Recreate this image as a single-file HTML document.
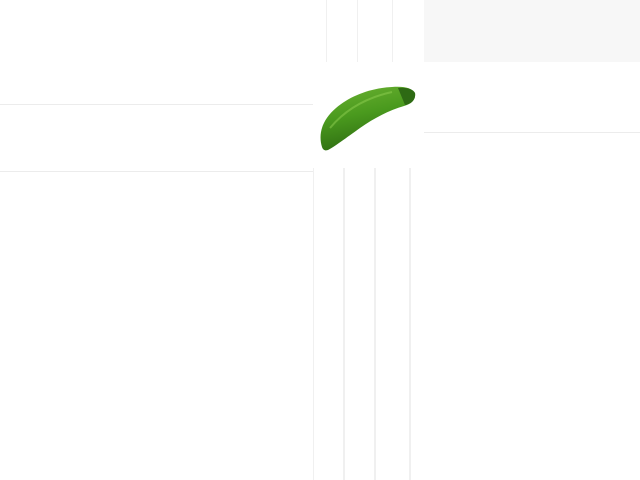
<!DOCTYPE html>
<html><head><style>
html,body{margin:0;padding:0;background:#fff;width:640px;height:480px;overflow:hidden;position:relative}
.l{position:absolute;background:#ececec}
.v{position:absolute;background:#f0f0f0}
</style></head><body>
<div style="position:absolute;left:424px;top:0;width:216px;height:62px;background:#f7f7f7"></div>
<div class="l" style="left:0;top:104px;width:313px;height:1px"></div>
<div class="l" style="left:0;top:171px;width:313px;height:1px"></div>
<div class="l" style="left:424px;top:132px;width:216px;height:1px"></div>
<div class="v" style="left:326px;top:0;width:1px;height:62px"></div>
<div class="v" style="left:357px;top:0;width:1px;height:62px"></div>
<div class="v" style="left:392px;top:0;width:1px;height:62px"></div>
<div class="v" style="left:313px;top:168px;width:1px;height:312px"></div>
<div class="v" style="left:343px;top:168px;width:2px;height:312px"></div>
<div class="v" style="left:374px;top:168px;width:2px;height:312px"></div>
<div class="v" style="left:409px;top:168px;width:2px;height:312px"></div>
<svg style="position:absolute;left:0;top:0" width="640" height="480">
<defs><linearGradient id="g" x1="0" y1="0" x2="0.3" y2="1">
<stop offset="0" stop-color="#6cb232"/><stop offset="0.5" stop-color="#4a9a1e"/><stop offset="1" stop-color="#2f6e12"/></linearGradient></defs>
<path d="M322,147 C318,134 322,120 336,108 C350,96 370,88 392,87 C404,86 412,88 415,93 C416,99 412,104 404,106 C390,110 374,118 360,128 C346,138 334,147 328,150 C325,151 323,150 322,147 Z" fill="url(#g)"/>
<path d="M398,88 C406,87 413,89 415,93 C416,99 412,104 405,105 Z" fill="#2e6a14"/>
<path d="M330,128 C345,110 365,98 392,92" stroke="#8fcf52" stroke-width="2" fill="none" opacity="0.5"/>
</svg>
</body></html>
